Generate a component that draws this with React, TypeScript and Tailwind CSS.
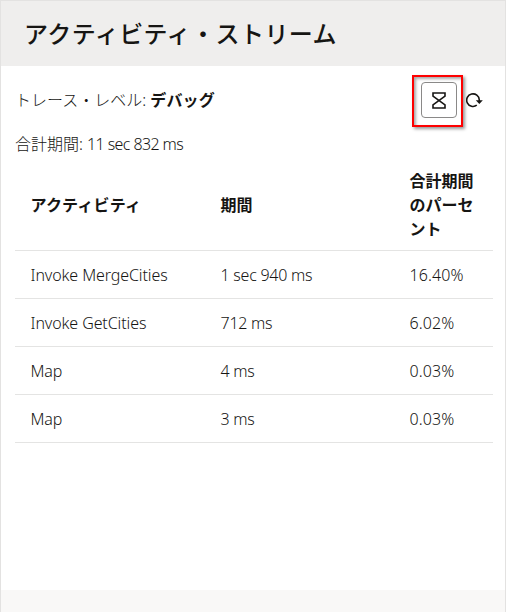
const rows = [
  ['Invoke MergeCities', '1 sec 940 ms', '16.40%'],
  ['Invoke GetCities', '712 ms', '6.02%'],
  ['Map', '4 ms', '0.03%'],
  ['Map', '3 ms', '0.03%'],
];

const cellTracking = ['tracking-[-0.1px]', 'tracking-[-0.25px]', 'tracking-[0.1px]'];

function HourglassIcon() {
  return (
    <svg width="14" height="17" viewBox="0 0 14 17" fill="none" stroke="#161513" strokeWidth="1.6">
      <path d="M1 1h12v3.2L1 12.8V16h12v-3.2L1 4.2z" />
    </svg>
  );
}

function RefreshIcon() {
  return (
    <svg width="17" height="16" viewBox="0 0 17 16" fill="none" stroke="#161513" strokeWidth="1.6">
      <path d="M10.8 13.2A6.3 6.3 0 1 1 13.3 8v1" />
      <path d="M9.8 8.2h7L13.3 12z" fill="#161513" stroke="none" />
    </svg>
  );
}

export default function App() {
  return (
    <main className="flex h-[612px] w-[506px] flex-col bg-[#f9f8f7] font-['Noto_Sans','Noto_Sans_CJK_JP',sans-serif] text-base leading-6 text-[#161513]">
      <div className="flex h-full flex-col border-x border-t border-[#e3e2e1]">
        <header className="flex h-[65px] shrink-0 items-center bg-[#efeeed] px-[23px] pb-0.5">
          <h1 className="font-['Noto_Sans_CJK_JP',sans-serif] text-2xl font-medium tracking-[0.45px]">アクティビティ・ストリーム</h1>
        </header>
        <section className="h-[524px] bg-white pl-[14px]">
          <div className="flex h-[66px] items-start pt-[9px]">
            <p className="mt-[13px] grow font-light">トレース・レベル: <b className="font-bold tracking-[0.15px]">デバッグ</b></p>
            <div className="h-[52px] w-[51px] border-2 border-[#fe0000] pt-[5px] pl-[7px] shadow-[2px_2px_3px_#999,inset_2px_2px_3px_#aaa]">
              <button className="flex h-9 w-9 items-center justify-center rounded border border-[#8a8988] bg-white" aria-label="Duration">
                <HourglassIcon />
              </button>
            </div>
            <button className="mt-[17px] mr-[22px] ml-[3px]" aria-label="Refresh"><RefreshIcon /></button>
          </div>
          <p className="font-light">合計期間: <span className="tracking-[-0.6px]">11 sec 832 ms</span></p>
          <table className="mt-3 w-[478px] table-fixed border-collapse text-left">
            <colgroup><col className="w-[190px]" /><col className="w-[189px]" /><col className="w-[99px]" /></colgroup>
            <thead>
              <tr className="h-[82px] border-b border-[#e4e4e3] font-['Noto_Sans_CJK_JP',sans-serif]">
                <th className="px-[15.5px] pb-2.5 font-bold tracking-[0.2px]">アクティビティ</th>
                <th className="px-[15.5px] pb-2.5 font-bold">期間</th>
                <th className="px-[15.5px] pb-2.5 font-bold">合計期間のパーセント</th>
              </tr>
            </thead>
            <tbody>
              {rows.map((row, i) => (
                <tr key={i} className="h-12 border-b border-[#e4e4e3] font-light">
                  {row.map((cell, j) => (
                    <td key={j} className={`px-[15.5px] whitespace-nowrap ${cellTracking[j]}`}>{cell}</td>
                  ))}
                </tr>
              ))}
            </tbody>
          </table>
        </section>
      </div>
    </main>
  );
}
